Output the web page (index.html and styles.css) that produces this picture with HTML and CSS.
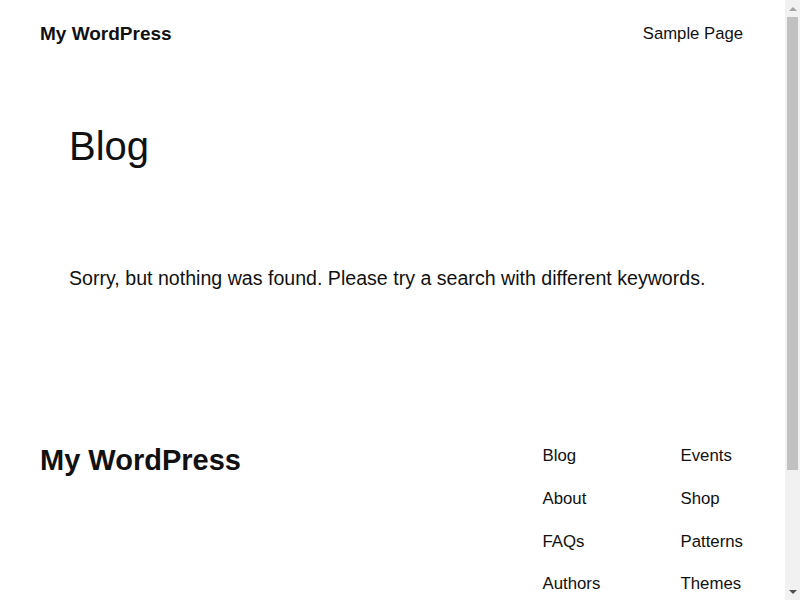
FILE: index.html
```html
<!DOCTYPE html>
<html lang="en">
<head>
  <meta charset="UTF-8" />
  <meta name="viewport" content="width=device-width, initial-scale=1" />
  <title>Blog – My WordPress</title>
  <link rel="stylesheet" href="styles.css">
</head>
<body>

  <div class="page">
    <header class="site-header">
      <a class="site-title" href="#">My WordPress</a>
      <nav class="header-nav">
        <a href="#">Sample Page</a>
      </nav>
    </header>

    <main class="site-main">
      <h1 class="page-title">Blog</h1>
      <p class="no-results">Sorry, but nothing was found. Please try a search with different keywords.</p>
    </main>

    <footer class="site-footer">
      <a class="footer-title" href="#">My WordPress</a>
      <div class="footer-navs">
        <ul class="footer-nav">
          <li><a href="#">Blog</a></li>
          <li><a href="#">About</a></li>
          <li><a href="#">FAQs</a></li>
          <li><a href="#">Authors</a></li>
        </ul>
        <ul class="footer-nav">
          <li><a href="#">Events</a></li>
          <li><a href="#">Shop</a></li>
          <li><a href="#">Patterns</a></li>
          <li><a href="#">Themes</a></li>
        </ul>
      </div>
    </footer>
  </div>

  <!-- browser scrollbar -->
  <div class="scrollbar">
    <div class="scroll-btn"><span class="arrow-up"></span></div>
    <div class="scroll-track">
      <div class="scroll-thumb"></div>
    </div>
    <div class="scroll-btn"><span class="arrow-down"></span></div>
  </div>

</body>
</html>
```

FILE: styles.css
```css
body {
  margin: 0;
  background: #fff;
  color: #111;
  font-family: "Liberation Sans", Arial, sans-serif;
  display: flex;
  align-items: flex-start;
}

a {
  color: #111;
  text-decoration: none;
}

.page {
  flex: 1;
  min-width: 0;
}

.site-header {
  display: flex;
  justify-content: space-between;
  align-items: flex-start;
  padding: 21px 42px 0 40px;
}

.site-title {
  font-size: 19px;
  font-weight: bold;
  line-height: 1.4;
}

.header-nav a {
  font-size: 16.7px;
  line-height: 26px;
}

.site-main {
  padding: 0 69px;
}

.page-title {
  margin: 74px 0 0;
  font-size: 40px;
  font-weight: normal;
  line-height: 1.2;
}

.no-results {
  margin: 94px 0 0;
  font-size: 19.6px;
  line-height: 1.5;
}

.site-footer {
  display: flex;
  justify-content: space-between;
  align-items: flex-start;
  padding: 150px 42px 100px 40px;
}

.footer-title {
  font-size: 29px;
  font-weight: bold;
  line-height: 1.2;
}

.footer-navs {
  display: flex;
  gap: 80px;
}

.footer-nav {
  list-style: none;
  margin: 0;
  padding: 0;
  display: flex;
  flex-direction: column;
  gap: 17.3px;
  min-width: 58px;
}

.footer-nav a {
  font-size: 16.8px;
  line-height: 25.5px;
}

/* Scrollbar */
.scrollbar {
  position: sticky;
  top: 0;
  width: 15px;
  height: 100vh;
  flex-shrink: 0;
  background: #f1f1f1;
  display: flex;
  flex-direction: column;
}

.scroll-btn {
  height: 17px;
  display: flex;
  align-items: center;
  justify-content: center;
}

.arrow-up {
  border-left: 4px solid transparent;
  border-right: 4px solid transparent;
  border-bottom: 4px solid #a3a3a3;
}

.arrow-down {
  border-left: 4px solid transparent;
  border-right: 4px solid transparent;
  border-top: 4px solid #505050;
}

.scroll-track {
  flex: 1;
  padding: 0 2px;
}

.scroll-thumb {
  height: 453px;
  background: #c1c1c1;
}
```
